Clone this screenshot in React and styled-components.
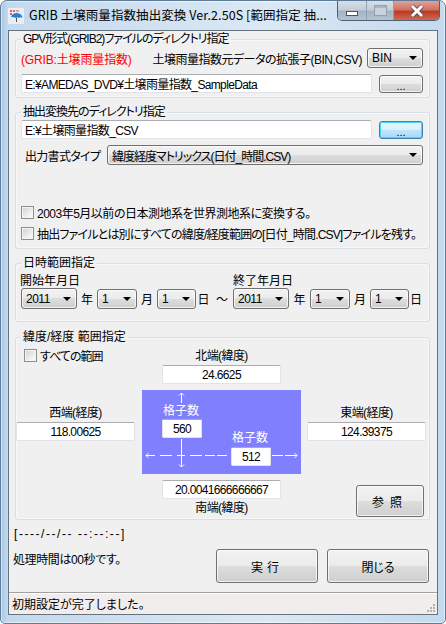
import React from 'react';
import styled, { createGlobalStyle } from 'styled-components';

const Global = createGlobalStyle`
html,body{margin:0;padding:0;background:#fff;}
*{box-sizing:border-box;}
body{font-family:"Liberation Sans","Noto Sans CJK JP",sans-serif;font-size:12px;color:#000;font-feature-settings:"palt";}
`;

const Frame = styled.div`
width:446px;height:624px;display:flex;flex-direction:column;padding:0 7px 8px;
border:1px solid #5d7a96;border-radius:7px 7px 5px 5px;
background:linear-gradient(90deg,#a9c7e4 0,#c3d9ee 7px,#dbe8f4 60%,#c3d9ee 100%);
box-shadow:inset 0 0 0 1px rgba(255,255,255,.55);
`;
const TitleBar = styled.div`
height:29px;flex:none;display:flex;align-items:flex-start;margin:0 -1px 0 0;
`;
const AppIcon = styled.svg`width:16px;height:16px;margin:7px 0 0 0;flex:none;`;
const TitleText = styled.div`
margin:5px 0 0 5px;flex:1;font-family:"Noto Sans CJK JP",sans-serif;font-feature-settings:normal;font-size:12.5px;line-height:18px;white-space:nowrap;letter-spacing:.08px;
`;
const CaptionGroup = styled.div`
display:flex;height:20px;flex:none;border:1px solid #4f6275;border-top:none;border-radius:0 0 5px 5px;overflow:hidden;margin-right:-1px;
`;
const CaptionBtn = styled.div`
width:${p=>p.$w}px;display:flex;align-items:center;justify-content:center;
border-left:${p=>p.$first?'none':'1px solid #8fa0b0'};
background:${p=>p.$close
  ?'linear-gradient(180deg,#dfa397 0,#d07463 45%,#bb3a26 55%,#cf6a52 100%)'
  :'linear-gradient(180deg,#d5dfe9 0,#c2ceda 48%,#a3b2c2 52%,#b4c3d2 100%)'};
`;
const MinGlyph = styled.div`width:12px;height:5px;background:#fff;border:1px solid #4a5560;margin-top:5px;`;
const MaxGlyph = styled.div`width:13px;height:11px;border:1px solid #93a1af;background:#c8d2dc;box-shadow:inset 0 2px 0 #a9b6c3;`;

const Client = styled.div`
flex:1;display:flex;flex-direction:column;background:#f0f0f0;border:1px solid #66727d;min-height:0;
`;
const Body = styled.div`flex:1;padding:0 7px 0 6px;min-height:0;`;

const Group = styled.fieldset`
margin:0 0 ${p=>p.$mb||0}px;padding:0;min-width:0;height:${p=>p.$h}px;
border:1px solid #d5dfe5;border-radius:3px;box-shadow:inset 0 0 0 1px rgba(255,255,255,.5);
`;
const Legend = styled.legend`
margin-left:5px;padding:0 2px;font-size:12px;line-height:16px;letter-spacing:${p=>p.$ls||0}px;
`;
const Row = styled.div`
display:flex;align-items:center;height:${p=>p.$h||20}px;margin:${p=>p.$t||0}px 6px 0 ${p=>p.$l||5}px;
`;
const Red = styled.span`color:#ff0000;font-size:12px;white-space:nowrap;letter-spacing:-.15px;`;
const Label = styled.span`white-space:nowrap;margin-right:${p=>p.$r||0}px;letter-spacing:${p=>p.$ls||0}px;`;
const Spacer = styled.div`flex:1;`;

const PathInput = styled.input`
font:inherit;font-feature-settings:"palt";letter-spacing:-.65px;height:19px;width:${p=>p.$w}px;padding:0 2px 0 3px;background:#fff;color:#000;outline:none;
border:1px solid #e2e3ea;border-top-color:#abadb3;border-radius:2px;flex:none;
text-align:${p=>p.$center?'center':'left'};display:block;
`;
const Btn = styled.button`
font:inherit;color:#000;padding:0;width:${p=>p.$w}px;height:${p=>p.$h}px;flex:none;display:flex;align-items:center;justify-content:center;
margin-top:${p=>p.$t||0}px;
border:1px solid ${p=>p.$focus?'#3c7fb1':'#707070'};border-radius:3px;
background:${p=>p.$focus
  ?'linear-gradient(180deg,#eaf6fd 0,#d9f0fc 50%,#bee6fd 50%,#a7d9f5 100%)'
  :'linear-gradient(180deg,#f2f2f2 0,#ebebeb 50%,#dddddd 50%,#cfcfcf 100%)'};
box-shadow:inset 0 0 0 1px ${p=>p.$focus?'#48d8fb':'rgba(255,255,255,.7)'};
letter-spacing:${p=>p.$ls||0}px;
`;
const Dots = styled.span`font-size:11px;line-height:1;margin-top:5px;`;

const Select = styled.div`
width:${p=>p.$w}px;height:${p=>p.$h||20}px;flex:none;display:flex;align-items:center;padding:0 5px 0 4px;white-space:nowrap;
border:1px solid #707070;border-radius:3px;letter-spacing:${p=>p.$ls||0}px;
background:linear-gradient(180deg,#f2f2f2 0,#ebebeb 50%,#dddddd 50%,#cfcfcf 100%);
box-shadow:inset 0 0 0 1px rgba(255,255,255,.7);
`;
const Caret = styled.span`
margin-left:auto;width:0;height:0;flex:none;border-left:4px solid transparent;border-right:4px solid transparent;border-top:4px solid #000;
`;
const Combo = ({value,...rest})=>(
  <Select {...rest}><span>{value}</span><Caret/></Select>
);

const Box = styled.span`
width:13px;height:13px;flex:none;border:1px solid #8e8f8f;margin-right:3px;
background:linear-gradient(135deg,#cfd0d1 0,#eeeeee 60%,#fdfdfd 100%);box-shadow:inset 0 0 0 1px #f4f4f4;
`;

const DateLabels = styled.div`display:flex;margin:3px 0 0 4px;height:15px;line-height:15px;`;
const DateLabel = styled.span`width:213px;flex:none;white-space:nowrap;`;
const DateRow = styled.div`display:flex;align-items:center;margin:-1px 0 0 5px;height:21px;white-space:nowrap;`;
const Unit = styled.span`width:${p=>p.$w}px;text-align:center;flex:none;`;

const RangeGrid = styled.div`
display:grid;grid-template-columns:126px 165px 119px;
`;
const Side = styled.div`display:flex;flex-direction:column;align-items:stretch;width:119px;`;
const Center = styled.div`display:flex;flex-direction:column;align-items:center;width:159px;`;
const Caption = styled.div`
text-align:center;line-height:16px;height:16px;white-space:nowrap;letter-spacing:-.6px;margin-top:${p=>p.$t||0}px;margin-bottom:${p=>p.$b||0}px;
`;
const AllRow = styled.div`display:flex;align-items:center;height:14px;margin:3px 0 0 8px;white-space:nowrap;`;
const ValueInput = styled(PathInput)`width:${p=>p.$w||119}px;padding:0;`;
const BlueMap = styled.div`
position:relative;width:159px;height:84px;background:#8080ff;margin:6px 0;color:#fff;
`;
const MapArrows = styled.svg`position:absolute;left:0;top:0;width:159px;height:84px;`;
const MapText = styled.span`position:absolute;left:${p=>p.$x}px;top:${p=>p.$y}px;width:40px;text-align:center;line-height:16px;`;
const MapInput = styled(ValueInput)`position:absolute;left:${p=>p.$x}px;top:${p=>p.$y}px;`;
const RefBtn = styled(Btn)`margin:44px 0 0 49px;`;

const Footer = styled.div`
display:grid;grid-template-columns:193px 102px 102px;column-gap:9px;margin:5px 0 0 -1px;
`;
const Info = styled.div`display:flex;flex-direction:column;`;
const InfoLine = styled.div`line-height:16px;height:16px;white-space:nowrap;margin-top:${p=>p.$t||0}px;margin-left:${p=>p.$l||0}px;letter-spacing:${p=>p.$ls||0}px;`;
const Status = styled.div`
height:22px;flex:none;display:flex;align-items:center;justify-content:space-between;padding:0 1px 0 3px;
background:#f1eded;border-top:1px solid #a0a0a0;box-shadow:inset 0 1px 0 #fff;
`;
const Grip = styled.svg`width:11px;height:11px;align-self:flex-end;margin-bottom:1px;`;

const Arrows = ()=>(
  <MapArrows viewBox="0 0 159 84">
    <g stroke="#fff" fill="none" strokeWidth="1" shapeRendering="crispEdges">
      <path d="M39.5 3V13"/>
      <path d="M39.5 49V77"/>
      <path d="M4 65.5H13M18 65.5H30M35 65.5H43M48 65.5H60M63 65.5H73M75 65.5H85"/>
      <path d="M130 65.5H141M143 65.5H155"/>
    </g>
    <g stroke="#fff" fill="none" strokeWidth="1">
      <path d="M37 5.5L39.5 3L42 5.5"/>
      <path d="M37 74.5L39.5 77L42 74.5"/>
      <path d="M6.5 63L4 65.5L6.5 68"/>
      <path d="M152.5 63L155 65.5L152.5 68"/>
    </g>
  </MapArrows>
);

export default function App(){
  return (
    <Frame>
      <Global/>
      <TitleBar>
        <AppIcon viewBox="0 0 16 16">
          <rect x="0" y="0" width="16" height="16" fill="#e6eff7"/>
          <path d="M2 2h2v2H2zM5 2h2v2H5zM2 5h2v2H2z" fill="#e85a5a"/>
          <path d="M8 2h3v2H8z" fill="#f0a0a0"/>
          <path d="M3 9C4 5 9 4 12 6c1.500 1 2.500 2.500 2.500 4-1.500-1-2.500-1-3.500 0-1-1-2.500-1-3.500 0-1-1-2.500-1-4.500-1z" fill="#2f7fd0"/>
          <path d="M8.500 9.500v4.500" stroke="#555" strokeWidth="1"/>
        </AppIcon>
        <TitleText>GRIB 土壌雨量指数抽出変換 Ver.2.50S [範囲指定 抽...</TitleText>
        <CaptionGroup>
          <CaptionBtn $w={28} $first><MinGlyph/></CaptionBtn>
          <CaptionBtn $w={27}><MaxGlyph/></CaptionBtn>
          <CaptionBtn $w={46} $close>
            <svg width="18" height="14" viewBox="0 0 18 14"><path d="M4 2l10 10M14 2L4 12" stroke="#4a3a3a" strokeWidth="4.4"/><path d="M4 2l10 10M14 2L4 12" stroke="#fff" strokeWidth="3"/></svg>
          </CaptionBtn>
        </CaptionGroup>
      </TitleBar>
      <Client>
        <Body>
          <Group $h={67} $mb={6}>
            <Legend $ls={-1}>GPV形式(GRIB2)ファイルのディレクトリ指定</Legend>
            <Row $t={1}>
              <Red>(GRIB:土壌雨量指数)</Red>
              <Spacer/>
              <Label $r={5} $ls={-.5}>土壌雨量指数元データの拡張子(BIN,CSV)</Label>
              <Combo value="BIN" $w={56}/>
            </Row>
            <Row $t={6} $h={19}>
              <PathInput $w={351} readOnly value="E:¥AMEDAS_DVD¥土壌雨量指数_SampleData"/>
              <Spacer/>
              <Btn $w={44} $h={18}><Dots>...</Dots></Btn>
            </Row>
          </Group>
          <Group $h={145} $mb={6}>
            <Legend $ls={-1}>抽出変換先のディレクトリ指定</Legend>
            <Row $h={19} $t={0}>
              <PathInput $w={351} readOnly value="E:¥土壌雨量指数_CSV"/>
              <Spacer/>
              <Btn $w={44} $h={18} $focus><Dots>...</Dots></Btn>
            </Row>
            <Row $t={6} $l={9}>
              <Label $ls={-.7}>出力書式タイプ</Label>
              <Spacer/>
              <Combo value="緯度経度マトリックス(日付_時間.CSV)" $w={316} $ls={-1}/>
            </Row>
            <Row $t={40} $l={5} $h={14}>
              <Box/><Label $ls={-.5}>2003年5月以前の日本測地系を世界測地系に変換する。</Label>
            </Row>
            <Row $t={7} $l={5} $h={14}>
              <Box/><Label $ls={-.82}>抽出ファイルとは別にすべての緯度/経度範囲の[日付_時間.CSV]ファイルを残す。</Label>
            </Row>
          </Group>
          <Group $h={67} $mb={7}>
            <Legend>日時範囲指定</Legend>
            <DateLabels>
              <DateLabel>開始年月日</DateLabel>
              <DateLabel>終了年月日</DateLabel>
            </DateLabels>
            <DateRow>
              <Combo value="2011" $w={56} $h={21} $ls={-.5}/><Unit $w={20}>年</Unit>
              <Combo value="1" $w={40}/><Unit $w={20}>月</Unit>
              <Combo value="1" $w={39}/><Unit $w={15}>日</Unit>
              <Unit $w={22}>～</Unit>
              <Combo value="2011" $w={56} $h={21} $ls={-.5}/><Unit $w={21}>年</Unit>
              <Combo value="1" $w={40}/><Unit $w={20}>月</Unit>
              <Combo value="1" $w={39}/><Unit $w={14}>日</Unit>
            </DateRow>
          </Group>
          <Group $h={191}>
            <Legend>緯度/経度 範囲指定</Legend>
            <RangeGrid>
              <Side>
                <AllRow><Box/><Label $ls={-1}>すべての範囲</Label></AllRow>
                <Caption $t={43} $b={1}>西端(経度)</Caption>
                <ValueInput $center readOnly value="118.00625"/>
              </Side>
              <Center>
                <Caption $t={3} $b={1}>北端(緯度)</Caption>
                <ValueInput $center readOnly value="24.6625"/>
                <BlueMap>
                  <Arrows/>
                  <MapText $x={19} $y={13}>格子数</MapText>
                  <MapInput $center $w={40} $x={20} $y={29} readOnly value="560"/>
                  <MapText $x={88} $y={40}>格子数</MapText>
                  <MapInput $center $w={40} $x={89} $y={57} readOnly value="512"/>
                </BlueMap>
                <ValueInput $center readOnly value="20.0041666666667"/>
                <Caption $t={1}>南端(緯度)</Caption>
              </Center>
              <Side>
                <Caption $t={60} $b={1}>東端(経度)</Caption>
                <ValueInput $center readOnly value="124.39375"/>
                <RefBtn $w={68} $h={32} $ls={6}>参照</RefBtn>
              </Side>
            </RangeGrid>
          </Group>
          <Footer>
            <Info>
              <InfoLine $t={1} $ls={1.55}>[----/--/-- --:--:--]</InfoLine>
              <InfoLine $t={10} $l={-1} $ls={-.4}>処理時間は00秒です。</InfoLine>
            </Info>
            <Btn $w={102} $h={34} $ls={4} $t={24}>実行</Btn>
            <Btn $w={102} $h={34} $t={24}>閉じる</Btn>
          </Footer>
        </Body>
        <Status>
          <span>初期設定が完了しました。</span>
          <Grip viewBox="0 0 11 11">
            <path d="M8 2h2v2H8zM5 5h2v2H5zM8 5h2v2H8zM2 8h2v2H2zM5 8h2v2H5zM8 8h2v2H8z" fill="#b5b2ac"/>
          </Grip>
        </Status>
      </Client>
    </Frame>
  );
}
